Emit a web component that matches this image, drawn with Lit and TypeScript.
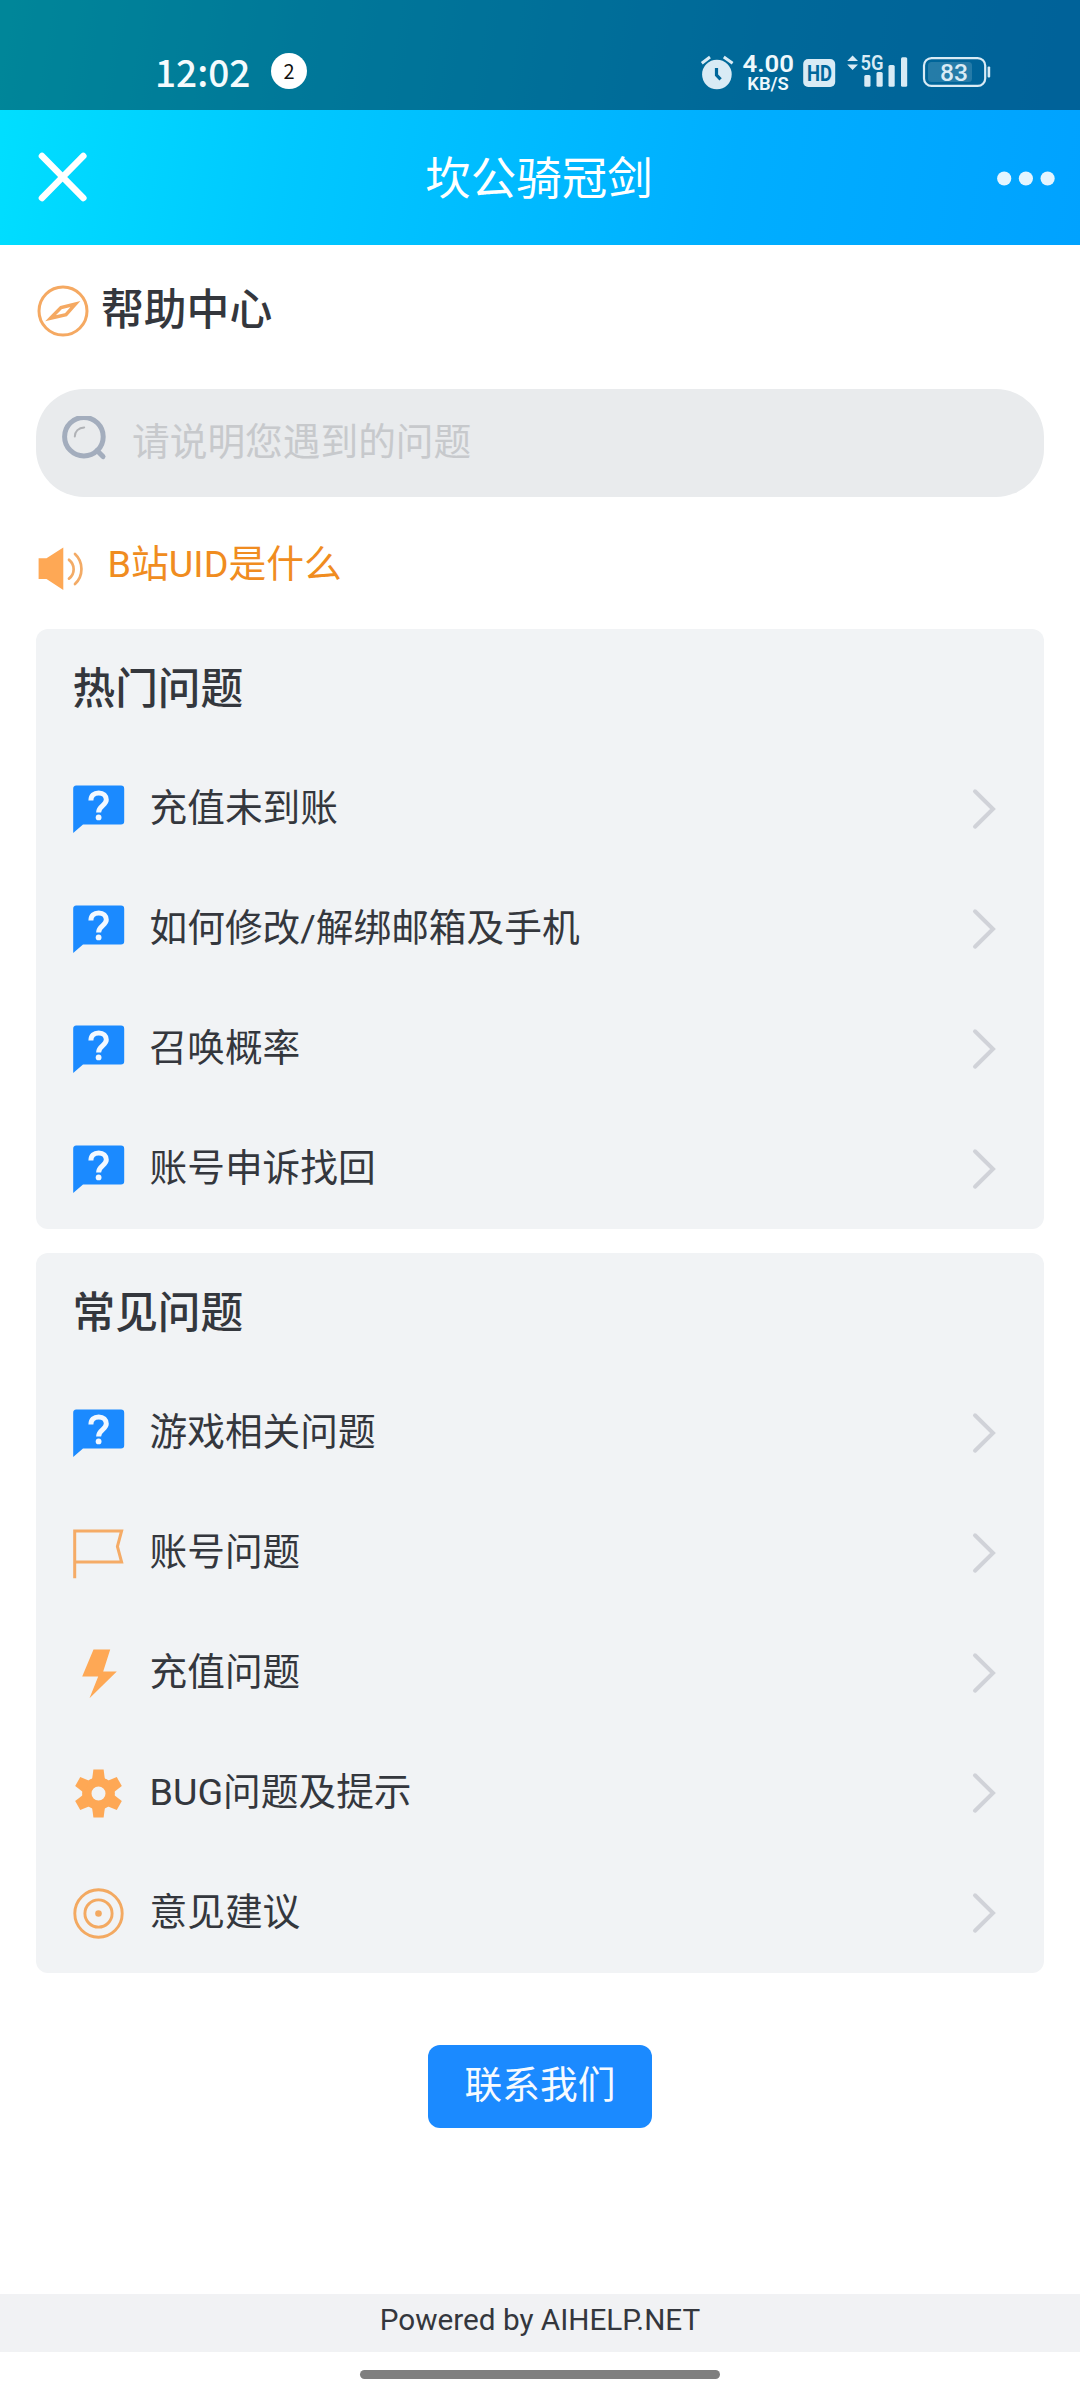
import { LitElement, html, css, svg, type TemplateResult } from "lit";
import { customElement, property } from "lit/decorators.js";

type IconName = "ask" | "flag" | "bolt" | "gear" | "target";

interface Entry {
  icon: IconName;
  label: string;
}

interface Section {
  title: string;
  entries: Entry[];
}

const SECTIONS: Section[] = [
  {
    title: "热门问题",
    entries: [
      { icon: "ask", label: "充值未到账" },
      { icon: "ask", label: "如何修改/解绑邮箱及手机" },
      { icon: "ask", label: "召唤概率" },
      { icon: "ask", label: "账号申诉找回" },
    ],
  },
  {
    title: "常见问题",
    entries: [
      { icon: "ask", label: "游戏相关问题" },
      { icon: "flag", label: "账号问题" },
      { icon: "bolt", label: "充值问题" },
      { icon: "gear", label: "BUG问题及提示" },
      { icon: "target", label: "意见建议" },
    ],
  },
];

const TOOTH_ANGLES = [0, 60, 120, 180, 240, 300];

const ICONS: Record<IconName, TemplateResult> = {
  ask: svg`
    <path fill="#1b8aff" d="M3.2 1.5H48A3.2 3.2 0 0 1 51.2 4.7V37.3A3.2 3.2 0 0 1 48 40.5H10L.2 48.9V4.7A3.2 3.2 0 0 1 3.2 1.5Z"/>
    <path fill="none" stroke="#f2f8ff" stroke-width="5" d="M17.9 16.6C17.9 11.6 21 9 25.7 9C30.4 9 33.3 11.8 33.3 15.8C33.3 21.4 25.6 22 25.6 28.4"/>
    <circle cx="25.6" cy="33.4" r="2.9" fill="#f2f8ff"/>`,
  flag: svg`<path fill="none" stroke="#f5ab66" stroke-width="3" d="M1.7 50.2V3H48.6L44.4 18.5L48.6 34H1.7"/>`,
  bolt: svg`<path fill="#fea855" d="M20.5 1.5H37.2L30.2 23.5H43.8L16.5 50.2L25.2 28.5H9.2Z"/>`,
  gear: svg`
    <circle cx="25.5" cy="25.5" r="11.7" fill="none" stroke="#fea855" stroke-width="9.4"/>
    ${TOOTH_ANGLES.map(
      (a) => svg`<path fill="#fea855" transform="rotate(${a} 25.5 25.5)" d="M20.4 1.5H30.6L32 12H19Z"/>`,
    )}`,
  target: svg`
    <g fill="none" stroke="#f3a961" stroke-width="2.9">
      <circle cx="25.5" cy="25.5" r="23.7"/>
      <circle cx="25.5" cy="25.5" r="13.6"/>
    </g>
    <circle cx="25.5" cy="25.5" r="3.3" fill="#f3a961"/>`,
};

@customElement("status-bar")
class StatusBar extends LitElement {
  static styles = css`
    :host {
      display: flex;
      justify-content: space-between;
      box-sizing: border-box;
      height: 110px;
      padding: 45px 89px 0 155px;
      background: rgba(0, 0, 0, 0.4);
      font-family: "Noto Sans CJK SC", sans-serif;
    }
    .left {
      display: flex;
      gap: 23px;
      height: 52px;
      align-items: center;
    }
    .time {
      width: 93px;
      padding-bottom: 1px;
      font-size: 37px;
      font-weight: 500;
      line-height: 50px;
      color: #f4fbfd;
      white-space: nowrap;
    }
    .count {
      width: 36px;
      height: 36px;
      border-radius: 50%;
      background: #fff;
      color: #111;
      font-size: 20px;
      line-height: 35px;
      text-align: center;
    }
    svg {
      display: block;
      overflow: visible;
      font-family: Roboto, sans-serif;
    }
  `;

  render() {
    return html`
      <div class="left">
        <span class="time">12:02</span>
        <span class="count">2</span>
      </div>
      <svg width="291" height="58" viewBox="700 45 291 58" fill="#d9ebf5">
        <circle cx="716.9" cy="74.5" r="14.8" />
        <path d="M701.8 63.2L710 57M723.8 57L732.6 63.2" stroke="#d9ebf5" stroke-width="3" />
        <path d="M716.5 68V75L720.6 79.4" fill="none" stroke="#00669a" stroke-width="3.2" />
        <g fill="#eff8fc" font-weight="600">
          <text x="742.5" y="72.4" font-size="24" textLength="51.5" lengthAdjust="spacingAndGlyphs">4.00</text>
          <text x="747.3" y="90" font-size="18.5" textLength="41.5" lengthAdjust="spacingAndGlyphs">KB/S</text>
        </g>
        <rect x="803.2" y="59" width="32" height="28" rx="5" />
        <text x="807" y="81" font-size="22.5" font-weight="700" fill="#00669a" textLength="25" lengthAdjust="spacingAndGlyphs">HD</text>
        <path d="M847.2 61L852.6 55.5L858 61ZM847.2 64.5H858L852.6 70Z" />
        <text x="860.6" y="70.4" font-size="20.5" font-weight="600" textLength="23" lengthAdjust="spacingAndGlyphs">5G</text>
        <rect x="864.3" y="75" width="6.2" height="11.8" rx="1.5" />
        <rect x="876.5" y="72" width="6.2" height="14.8" rx="1.5" />
        <rect x="888.5" y="65" width="6.2" height="21.8" rx="1.5" />
        <rect x="901" y="57.2" width="6.2" height="29.6" rx="1.5" />
        <rect x="924" y="58.1" width="61.2" height="27.8" rx="7.5" fill="none" stroke="#d9ebf5" stroke-width="2.2" />
        <rect x="928" y="62" width="44" height="20" rx="3.5" fill-opacity="0.17" />
        <rect x="987.6" y="66.5" width="2.6" height="11" rx="1" />
        <text x="940" y="80.6" font-size="24" font-weight="500" textLength="28" lengthAdjust="spacingAndGlyphs">83</text>
      </svg>
    `;
  }
}

@customElement("nav-bar")
class NavBar extends LitElement {
  static styles = css`
    :host {
      display: flex;
      align-items: center;
      justify-content: space-between;
      box-sizing: border-box;
      height: 135px;
      padding: 0 24px 0 37px;
    }
    svg {
      display: block;
    }
    .side {
      width: 60px;
    }
    .title {
      margin: 0;
      padding: 5px 15px 0 0;
      font-size: 45.5px;
      font-weight: 400;
      line-height: 60px;
      color: #fff;
      white-space: nowrap;
    }
  `;

  render() {
    return html`
      <svg class="side" height="60" viewBox="37 148 60 60" fill="none" stroke="#fff" stroke-width="6.6" stroke-linecap="round">
        <path d="M42 156L83.3 198M83.3 156L42 198" />
      </svg>
      <h1 class="title">坎公骑冠剑</h1>
      <svg class="side" height="60" viewBox="996 147.5 60 60" fill="#e4f5ff">
        <circle cx="1004.2" cy="178" r="7.1" />
        <circle cx="1025.9" cy="178" r="7.1" />
        <circle cx="1047.6" cy="178" r="7.1" />
      </svg>
    `;
  }
}

@customElement("faq-card")
class FaqCard extends LitElement {
  @property({ attribute: false }) section!: Section;

  static styles = css`
    :host {
      display: block;
      border-radius: 12px;
      background: #f1f3f5;
      color: #34373d;
    }
    .title {
      margin: 0;
      padding: 0 36.5px;
      height: 120px;
      box-sizing: border-box;
      font-size: 42.7px;
      font-weight: 500;
      line-height: 121px;
    }
    .row {
      display: flex;
      align-items: center;
      height: 120px;
      padding: 0 48px 0 37px;
    }
    svg {
      display: block;
      flex: none;
    }
    .label {
      flex: 1;
      margin-left: 25px;
      padding-bottom: 3px;
      font-size: 37.7px;
      line-height: 56px;
      white-space: nowrap;
    }
  `;

  render() {
    return html`
      <h2 class="title">${this.section.title}</h2>
      ${this.section.entries.map(
        (e) => html`
          <div class="row">
            <svg width="51.5" height="51" viewBox="0 0 51.5 51">${ICONS[e.icon]}</svg>
            <span class="label">${e.label}</span>
            <svg width="24" height="44" viewBox="0 0 24 44" fill="none" stroke="#d0d2d8" stroke-width="4" stroke-linecap="round">
              <path d="M3 4.3L21 22L3 39.7" />
            </svg>
          </div>
        `,
      )}
    `;
  }
}

@customElement("app-root")
class AppRoot extends LitElement {
  static styles = css`
    :host {
      display: flex;
      flex-direction: column;
      width: 1080px;
      height: 2400px;
      background: #fff;
      font-family: Roboto, "Noto Sans CJK SC", sans-serif;
      color: #34373d;
    }
    .top {
      flex: none;
      background: linear-gradient(100deg, #00e0ff 0%, #00c8ff 28%, #00aeff 68%, #00a2ff 100%);
    }
    .body {
      flex: 1;
      display: flex;
      flex-direction: column;
      padding: 0 36px;
    }
    svg {
      display: block;
      flex: none;
    }
    .heading {
      display: flex;
      align-items: center;
      gap: 12px;
      height: 60px;
      margin-top: 36px;
    }
    .heading-text {
      margin: 0;
      padding-bottom: 2px;
      font-size: 42.8px;
      font-weight: 500;
      line-height: 60px;
    }
    .search {
      display: flex;
      align-items: center;
      gap: 24px;
      height: 108px;
      margin-top: 48px;
      padding-left: 24px;
      border-radius: 48px;
      background: #e9ebed;
    }
    .placeholder {
      padding-bottom: 3px;
      font-size: 37.7px;
      line-height: 56px;
      color: #c7c9cc;
    }
    .notice {
      display: flex;
      align-items: center;
      gap: 20.5px;
      height: 60px;
      margin-top: 42px;
    }
    .notice-text {
      padding-bottom: 9px;
      font-size: 37.8px;
      line-height: 49px;
      color: #f08c20;
    }
    .cards {
      display: flex;
      flex-direction: column;
      gap: 24px;
      margin-top: 30px;
    }
    .contact {
      align-self: center;
      width: 224px;
      height: 83px;
      margin-top: 72px;
      padding: 0 0 3px;
      border: 0;
      border-radius: 12px;
      background: #1b8aff;
      color: #f6faff;
      font: inherit;
      font-size: 37.7px;
      line-height: 80px;
    }
    .powered {
      flex: none;
      height: 58px;
      background: #f1f2f4;
      font-size: 29.7px;
      line-height: 52px;
      text-align: center;
    }
    .home {
      flex: none;
      display: flex;
      justify-content: center;
      height: 30px;
      padding-top: 18px;
    }
    .pill {
      width: 360px;
      height: 9px;
      border-radius: 4.5px;
      background: #7f7f7f;
    }
  `;

  render() {
    return html`
      <header class="top">
        <status-bar></status-bar>
        <nav-bar></nav-bar>
      </header>
      <main class="body">
        <div class="heading">
          <svg width="53" height="54" viewBox="36 284 53 54" fill="none" stroke="#f5a962" stroke-width="3">
            <circle cx="63" cy="311" r="24" />
            <path d="M50.5 318.2L61 307.5L75.5 304L66 314.6Z" stroke-width="3.4" />
          </svg>
          <h2 class="heading-text">帮助中心</h2>
        </div>
        <div class="search">
          <svg width="48" height="54" viewBox="60 416 48 54" fill="none" stroke-linecap="round">
            <circle cx="83.9" cy="436.7" r="19.3" stroke="#a3adbd" stroke-width="5" />
            <path d="M97 450.5L103 456.6" stroke="#a3adbd" stroke-width="5" />
            <path d="M74.8 436.6C74.8 431.4 78.6 427.6 84.2 427.4" stroke="#b0b2b6" stroke-width="2" />
          </svg>
          <span class="placeholder">请说明您遇到的问题</span>
        </div>
        <div class="notice">
          <svg width="51" height="48" viewBox="36 545 51 48" fill="none" stroke="#f3ab66" stroke-width="2.7" stroke-linecap="round">
            <path d="M38.6 558.3H46.5L63.3 547.6V590L46.5 579H38.6Z" fill="#fea855" stroke="none" />
            <path d="M69 559.8C75.2 564.5 75.2 574 69 578.6M75 554C83.6 562 83.6 576 75 584" />
          </svg>
          <span class="notice-text">B站UID是什么</span>
        </div>
        <div class="cards">
          ${SECTIONS.map((s) => html`<faq-card .section=${s}></faq-card>`)}
        </div>
        <button class="contact">联系我们</button>
      </main>
      <footer class="powered">Powered by AIHELP.NET</footer>
      <div class="home"><div class="pill"></div></div>
    `;
  }
}
